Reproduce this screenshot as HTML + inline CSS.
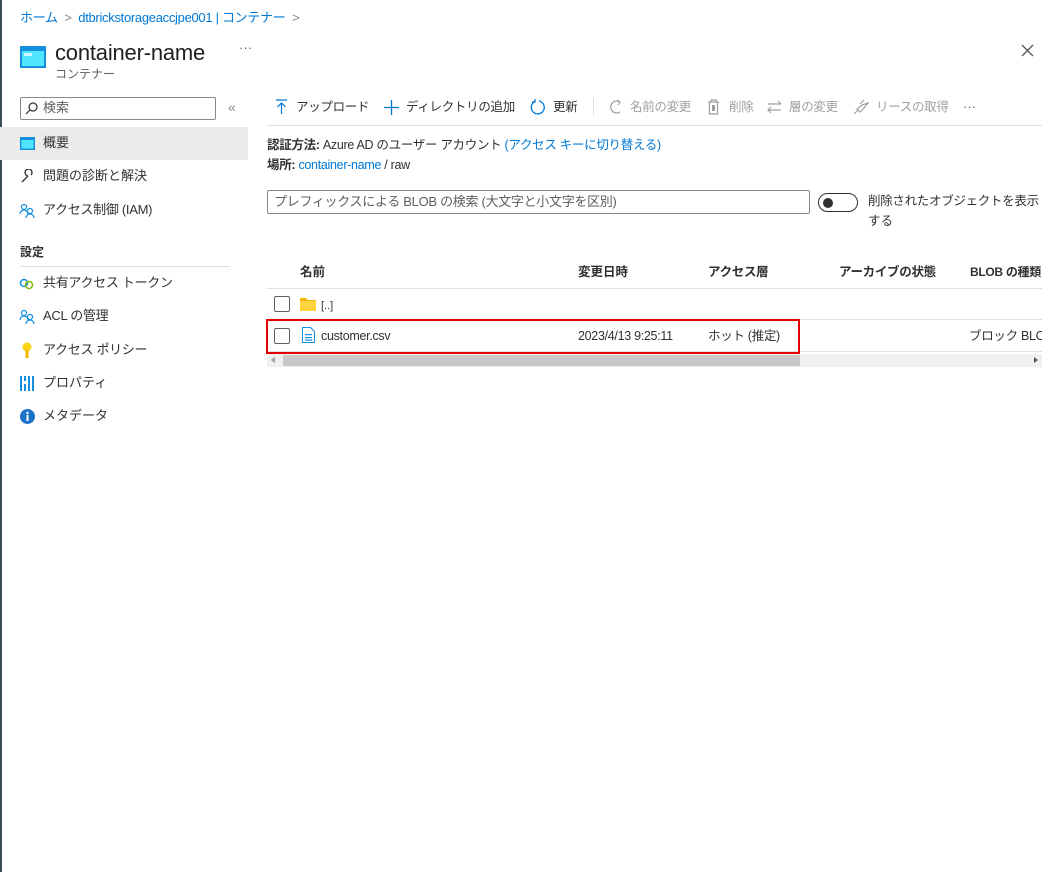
<!DOCTYPE html>
<html><head><meta charset="utf-8"><style>
*{box-sizing:border-box;margin:0;padding:0}
body{width:1061px;height:872px;background:#fff;font-family:"Liberation Sans","Noto Sans CJK JP",sans-serif;color:#323130;position:relative;overflow:hidden;font-size:13px}
.a{position:absolute;white-space:nowrap;line-height:16px}
.blue{color:#0078d4}
.g{color:#a19f9d}
.cb{position:absolute;width:16px;height:16px;border:1px solid #605e5c;border-radius:2px;background:#fff}
.t{letter-spacing:-0.3px}
</style></head><body>
<div class="a" style="left:0;top:0;width:2px;height:872px;background:#3b4d55"></div>
<div class="a blue t" style="left:20px;top:10px;font-size:13px">ホーム <span style="color:#8a8886">&nbsp;&gt;&nbsp;</span> dtbrickstorageaccjpe001 | コンテナー <span style="color:#8a8886">&nbsp;&gt;</span></div>
<svg class="a" style="left:20px;top:46px" width="26" height="22"><rect x="0" y="0" width="26" height="22" fill="#1490df"/><rect x="2" y="5" width="22" height="15" fill="#50e6ff"/><rect x="4" y="7" width="8" height="3" fill="#fff" opacity=".7"/></svg>
<div class="a" style="left:55px;top:41px;font-size:22px;line-height:24px;color:#201f1e;letter-spacing:-0.2px">container-name</div>
<div class="a" style="left:239px;top:40px;font-size:13px;color:#605e5c">···</div>
<div class="a" style="left:55px;top:66px;font-size:12px;color:#605e5c">コンテナー</div>
<svg class="a" style="left:1021px;top:44px" width="13" height="13"><path d="M1 1L12 12M12 1L1 12" stroke="#555" stroke-width="1.3"/></svg>

<div class="a" style="left:20px;top:97px;width:196px;height:23px;border:1px solid #8a8886;border-radius:2px"></div>
<svg class="a" style="left:25px;top:102px" width="13" height="13"><circle cx="8" cy="5" r="4" fill="none" stroke="#323130" stroke-width="1.2"/><path d="M5 8L1 12" stroke="#323130" stroke-width="1.2"/></svg>
<div class="a" style="left:43px;top:100px;font-size:13px;color:#605e5c">検索</div>
<div class="a" style="left:228px;top:99px;font-size:14px;color:#8a8886">«</div>
<div class="a" style="left:0;top:127px;width:248px;height:33px;background:#edebe9"></div>
<svg class="a" style="left:20px;top:137px" width="15" height="13"><rect width="15" height="13" fill="#1490df"/><rect x="1.5" y="3" width="12" height="8.5" fill="#50e6ff"/></svg>
<div class="a" style="left:43px;top:135px">概要</div>
<svg class="a" style="left:20px;top:169px" width="15" height="15"><path d="M2 13L8 7M8 7a3.5 3.5 0 1 1 3-1" fill="none" stroke="#323130" stroke-width="1.3"/></svg>
<div class="a" style="left:43px;top:168px">問題の診断と解決</div>
<svg class="a" style="left:19px;top:203px" width="16" height="15"><circle cx="5" cy="4" r="2.5" fill="none" stroke="#1490df" stroke-width="1.2"/><path d="M1 11a4 4 0 0 1 8 0" fill="none" stroke="#1490df" stroke-width="1.2"/><circle cx="11" cy="8" r="2.5" fill="none" stroke="#1490df" stroke-width="1.2"/><path d="M7 15a4 4 0 0 1 8 0" fill="none" stroke="#1490df" stroke-width="1.2"/></svg>
<div class="a t" style="left:43px;top:202px">アクセス制御 (IAM)</div>
<div class="a" style="left:20px;top:244px;font-weight:bold;font-size:12px">設定</div>
<div class="a" style="left:20px;top:266px;width:210px;height:1px;background:#e1dfdd"></div>
<svg class="a" style="left:19px;top:278px" width="16" height="12"><circle cx="5" cy="5" r="3.5" fill="none" stroke="#1490df" stroke-width="1.5"/><circle cx="10" cy="7" r="3.5" fill="none" stroke="#7fba00" stroke-width="1.5"/></svg>
<div class="a t" style="left:43px;top:275px">共有アクセス トークン</div>
<svg class="a" style="left:19px;top:309px" width="16" height="15"><circle cx="5" cy="4" r="2.5" fill="none" stroke="#1490df" stroke-width="1.2"/><path d="M1 11a4 4 0 0 1 8 0" fill="none" stroke="#1490df" stroke-width="1.2"/><circle cx="11" cy="8" r="2.5" fill="none" stroke="#1490df" stroke-width="1.2"/><path d="M7 15a4 4 0 0 1 8 0" fill="none" stroke="#1490df" stroke-width="1.2"/></svg>
<div class="a t" style="left:43px;top:308px">ACL の管理</div>
<svg class="a" style="left:22px;top:342px" width="10" height="16"><circle cx="5" cy="5" r="4.5" fill="#fcd116"/><rect x="3.5" y="8" width="3" height="8" fill="#f2b500"/></svg>
<div class="a t" style="left:43px;top:342px">アクセス ポリシー</div>
<svg class="a" style="left:20px;top:376px" width="14" height="15"><rect x="0" y="0" width="2" height="15" fill="#1490df"/><rect x="4" y="0" width="2" height="15" fill="#1490df"/><rect x="8" y="0" width="2" height="15" fill="#1490df"/><rect x="12" y="0" width="2" height="15" fill="#1490df"/><rect x="3.5" y="5" width="3" height="3" fill="#fff"/></svg>
<div class="a" style="left:43px;top:375px">プロパティ</div>
<svg class="a" style="left:20px;top:409px" width="15" height="15"><circle cx="7.5" cy="7.5" r="7.5" fill="#1b73c7"/><rect x="6.5" y="6" width="2" height="6" fill="#fff"/><circle cx="7.5" cy="4" r="1.2" fill="#fff"/></svg>
<div class="a" style="left:43px;top:408px">メタデータ</div>

<!-- toolbar -->
<svg class="a" style="left:275px;top:99px" width="13" height="16"><path d="M1 1H12M6.5 4V15M2.5 8L6.5 4L10.5 8" fill="none" stroke="#0078d4" stroke-width="1.2"/></svg>
<div class="a t" style="left:296px;top:99px;font-size:12.5px">アップロード</div>
<svg class="a" style="left:384px;top:100px" width="15" height="15"><path d="M7.5 0V15M0 7.5H15" stroke="#0078d4" stroke-width="1.3"/></svg>
<div class="a t" style="left:406px;top:99px;font-size:12.5px">ディレクトリの追加</div>
<svg class="a" style="left:530px;top:99px" width="16" height="16"><path d="M5 2.5A6.5 6.5 0 1 0 9 2" fill="none" stroke="#0078d4" stroke-width="1.3"/><path d="M5 0V3H2" fill="none" stroke="#0078d4" stroke-width="1.3"/></svg>
<div class="a t" style="left:553px;top:99px;font-size:12.5px">更新</div>
<div class="a" style="left:593px;top:98px;width:1px;height:18px;background:#e1dfdd"></div>
<svg class="a" style="left:609px;top:99px" width="14" height="16"><path d="M11 3A6 6 0 1 0 11 13" fill="none" stroke="#a19f9d" stroke-width="1.2"/><path d="M8 1L11 3L9 6" fill="none" stroke="#a19f9d" stroke-width="1.2"/></svg>
<div class="a g t" style="left:630px;top:99px;font-size:12.5px">名前の変更</div>
<svg class="a" style="left:707px;top:99px" width="13" height="16"><path d="M1 3H12M4 3V1H9V3M2.5 3V15H10.5V3" fill="none" stroke="#a19f9d" stroke-width="1.2"/><rect x="5" y="6" width="3" height="6" fill="#a19f9d"/></svg>
<div class="a g t" style="left:729px;top:99px;font-size:12.5px">削除</div>
<svg class="a" style="left:767px;top:100px" width="15" height="14"><path d="M1 4H14M11 1L14 4M14 10H1M4 7L1 10L4 13" fill="none" stroke="#a19f9d" stroke-width="1.2"/></svg>
<div class="a g t" style="left:789px;top:99px;font-size:12.5px">層の変更</div>
<svg class="a" style="left:853px;top:99px" width="16" height="16"><path d="M1 15L5 11M7 5L11 1M15 4L11 9L7 13L4 10L9 6Z" fill="none" stroke="#a19f9d" stroke-width="1.2"/></svg>
<div class="a g t" style="left:876px;top:99px;font-size:12.5px">リースの取得</div>
<div class="a" style="left:963px;top:99px;color:#605e5c">···</div>
<div class="a" style="left:267px;top:125px;width:775px;height:1px;background:#e1dfdd"></div>

<div class="a t" style="left:267px;top:137px;font-size:12.5px"><b>認証方法:</b> Azure AD のユーザー アカウント <span class="blue">(アクセス キーに切り替える)</span></div>
<div class="a t" style="left:267px;top:157px;font-size:12.5px"><b>場所:</b> <span class="blue">container-name</span> / raw</div>

<div class="a" style="left:267px;top:190px;width:543px;height:24px;border:1px solid #8a8886;border-radius:2px"></div>
<div class="a t" style="left:274px;top:194px;color:#605e5c">プレフィックスによる BLOB の検索 (大文字と小文字を区別)</div>
<div class="a" style="left:818px;top:193px;width:40px;height:19px;border:1px solid #323130;border-radius:10px"></div>
<div class="a" style="left:823px;top:198px;width:10px;height:10px;border-radius:50%;background:#323130"></div>
<div class="a t" style="left:868px;top:193px;font-size:12.5px">削除されたオブジェクトを表示</div>
<div class="a" style="left:868px;top:213px;font-size:12.5px">する</div>

<div class="a" style="left:300px;top:264px;font-size:12.5px;font-weight:bold">名前</div>
<div class="a" style="left:578px;top:264px;font-size:12.5px;font-weight:bold">変更日時</div>
<div class="a t" style="left:708px;top:264px;font-size:12.5px;font-weight:bold">アクセス層</div>
<div class="a t" style="left:839px;top:264px;font-size:12.5px;font-weight:bold">アーカイブの状態</div>
<div class="a t" style="left:970px;top:264px;font-size:12px;font-weight:bold">BLOB の種類</div>
<div class="a" style="left:267px;top:288px;width:775px;height:1px;background:#e1dfdd"></div>
<div class="cb" style="left:274px;top:296px"></div>
<svg class="a" style="left:300px;top:297px" width="16" height="14"><path d="M0 1H6L7.5 3H16V14H0Z" fill="#f2b500"/><rect x="0" y="4" width="16" height="10" fill="#ffd23f"/></svg>
<div class="a" style="left:321px;top:298px;font-size:11px">[..]</div>
<div class="a" style="left:267px;top:319px;width:775px;height:1px;background:#e1dfdd"></div>
<div class="cb" style="left:274px;top:328px"></div>
<svg class="a" style="left:302px;top:327px" width="13" height="16"><path d="M0.5 0.5H8.5L12.5 4.5V15.5H0.5Z" fill="#fff" stroke="#1490df"/><rect x="3" y="7" width="7" height="1.2" fill="#1490df"/><rect x="3" y="10" width="7" height="1.2" fill="#1490df"/><rect x="3" y="12.5" width="7" height="1.2" fill="#1490df"/></svg>
<div class="a t" style="left:321px;top:328px;font-size:12.5px">customer.csv</div>
<div class="a t" style="left:578px;top:328px;font-size:12.5px">2023/4/13 9:25:11</div>
<div class="a t" style="left:708px;top:328px;font-size:12.5px">ホット (推定)</div>
<div class="a t" style="left:969px;top:328px;font-size:12.5px;width:73px;overflow:hidden">ブロック BLOB</div>
<div class="a" style="left:267px;top:351px;width:775px;height:1px;background:#e1dfdd"></div>
<div class="a" style="left:266px;top:319px;width:534px;height:35px;border:2px solid #e50000"></div>
<div class="a" style="left:267px;top:354px;width:775px;height:13px;background:#f0f0f0"></div>
<div class="a" style="left:283px;top:355px;width:517px;height:11px;background:#c8c8c8"></div>
<div class="a" style="left:271px;top:357px;width:0;height:0;border:3px solid transparent;border-right:4px solid #999;border-left:0"></div>
<div class="a" style="left:1034px;top:357px;width:0;height:0;border:3px solid transparent;border-left:4px solid #555;border-right:0"></div>
</body></html>
